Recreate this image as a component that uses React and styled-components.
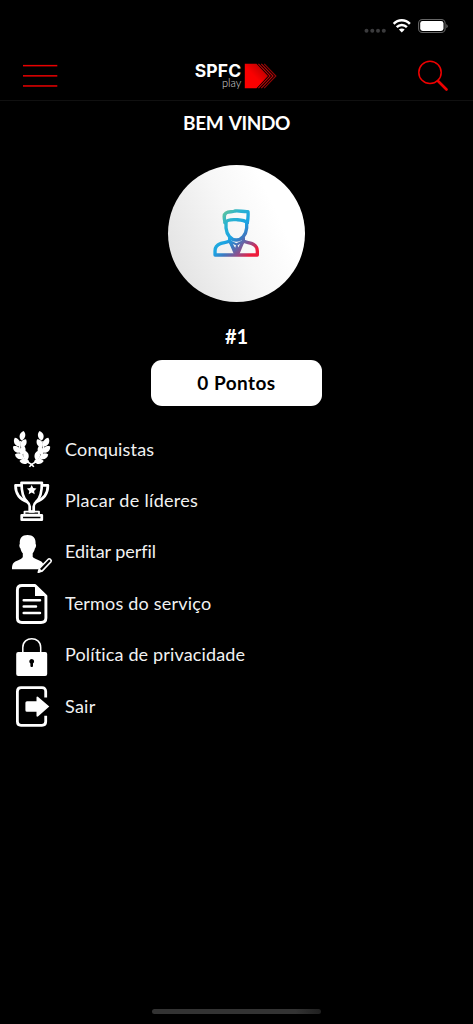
import React from "react";
import styled, { createGlobalStyle } from "styled-components";

const GlobalStyle = createGlobalStyle`
  * {
    box-sizing: border-box;
  }
  body {
    margin: 0;
    background: #000;
    color: #fff;
    font-family: Lato, "Open Sans", sans-serif;
  }
`;

const leaves = [
  [22.3, 11.8, 16],
  [16.8, 18.2, -24],
  [23.3, 19.2, 34],
  [16.8, 25.6, -50],
  [22.6, 26.2, 14],
  [19.4, 32.4, -66],
  [25.8, 31.6, -8],
  [24.4, 37.4, -86],
];

const LaurelHalf = () => (
  <>
    {leaves.map(([x, y, angle]) => (
      <path
        key={`${x}-${y}`}
        d="M0 -4.900C3.600 -2.800 4 2 0.500 4.800C-3.600 2.800 -3.600 -2.400 0 -4.900Z"
        transform={`translate(${x} ${y}) rotate(${angle})`}
      />
    ))}
    <path
      d="M20.300 17C18.500 24 21 35 28 38.300C30 39.300 32.300 40.500 33.800 42.800"
      fill="none"
      stroke="#fff"
      strokeWidth="1.500"
    />
  </>
);

const LaurelIcon = () => (
  <MenuIcon viewBox="0 0 65 51.400">
    <LaurelHalf />
    <g transform="translate(63.200 0) scale(-1 1)">
      <LaurelHalf />
    </g>
  </MenuIcon>
);

const TrophyIcon = () => (
  <MenuIcon viewBox="0 0 65 51.400">
    <g fill="none" stroke="#fff" strokeWidth="2.700" strokeLinejoin="round">
      <path d="M21.500 7.800H41.900C41.900 17 40 23.500 36.500 26.500C34.500 28.300 33.700 29.500 33.700 31.500V36.500H29.700V31.500C29.700 29.500 28.900 28.300 26.900 26.500C23.400 23.500 21.500 17 21.500 7.800Z" />
      <path d="M21.500 10.300H15.500C15.500 18 18.500 24 27.500 27M41.900 10.300H47.900C47.900 18 44.900 24 35.900 27" />
      <path d="M24.500 36.600H39V39.600H24.500Z" strokeWidth="1.800" />
      <path d="M21.700 40.300H41.800V44.700H21.700Z" />
    </g>
    <path d="M31.700 10L33.200 13.100L36.500 13.500L34.100 15.900L34.700 19.200L31.700 17.600L28.700 19.200L29.300 15.900L26.900 13.500L30.200 13.100Z" />
  </MenuIcon>
);

const ProfileIcon = () => (
  <MenuIcon viewBox="0 0 65 51.400">
    <path d="M27.500 8C33 8 36 11 35.600 17C36.500 17.500 36.100 20.500 34.900 21.500C34.400 24 33.400 25.500 32.700 26.300V30C34.500 32.500 42 33 43.300 37L38.500 42.200H12C12 37.500 13 35.300 16.500 34C20 32.700 22.300 31.500 22.800 30V26.300C21.800 25.300 20.800 23.500 20.500 21.500C19.300 20.500 18.900 17.500 19.800 17C19.400 11 22 8 27.500 8Z" />
    <path
      d="M38.300 45.300L39.500 41.200L48.200 32.200C49.400 31 52.100 33.200 51 34.700L42.300 43.900Z"
      fill="#000"
      stroke="#fff"
      strokeWidth="1.600"
      strokeLinejoin="round"
    />
    <path d="M37.800 45.900L39.200 41.200L42.500 43.900Z" />
  </MenuIcon>
);

const DocumentIcon = () => (
  <MenuIcon viewBox="0 0 65 51.400">
    <g fill="none" stroke="#fff" strokeWidth="2.900" strokeLinecap="round">
      <path
        d="M35 7.500H22C19 7.500 17.400 9.300 17.400 12V40C17.400 43 19.300 44.500 22 44.500H41C44 44.500 45.900 43 45.900 40V18Z"
        strokeLinejoin="round"
      />
      <path d="M23.700 22.300H40M23.700 28.600H36M23.700 35H40" strokeWidth="2.500" />
    </g>
    <path d="M35 6.500V18H47Z" />
  </MenuIcon>
);

const LockIcon = () => (
  <MenuIcon viewBox="0 0 65 51.400">
    <path
      d="M22.800 23V17.500C22.800 5.800 40.700 5.800 40.700 17.500V23"
      fill="none"
      stroke="#fff"
      strokeWidth="1.500"
    />
    <rect x="16.200" y="22" width="31" height="24" rx="2" />
    <path
      d="M31.700 29A2.500 2.500 0 0 1 33 33.600V36.200Q31.700 38 30.400 36.200V33.600A2.500 2.500 0 0 1 31.700 29Z"
      fill="#000"
    />
  </MenuIcon>
);

const ExitIcon = () => (
  <MenuIcon viewBox="0 0 65 51.400">
    <path
      d="M45.700 16.500V10.500C45.700 8 44.300 6.600 42 6.600H21C18.700 6.600 17.400 8 17.400 10.500V40.500C17.400 43 18.700 44.300 21 44.300H42C44.300 44.300 45.700 43 45.700 40.500V34.800"
      fill="none"
      stroke="#fff"
      strokeWidth="2.800"
    />
    <path d="M27 20.300H36.500V16.600Q36.700 15 38.200 16L49.300 25.600L38.200 35.200Q36.700 36.300 36.500 34.700V30.700H27Q25.400 30.700 25.400 29.200V21.800Q25.400 20.300 27 20.300Z" />
  </MenuIcon>
);

const menuItems = [
  { title: "Conquistas", icon: LaurelIcon, spacing: 0.18 },
  { title: "Placar de líderes", icon: TrophyIcon, spacing: 0.3 },
  { title: "Editar perfil", icon: ProfileIcon, spacing: -0.05 },
  { title: "Termos do serviço", icon: DocumentIcon, spacing: 0.2 },
  { title: "Política de privacidade", icon: LockIcon, spacing: 0.15 },
  { title: "Sair", icon: ExitIcon, spacing: 0.25 },
];

function StatusIcons() {
  return (
    <StatusBar>
      <svg width="86" height="18" viewBox="363 17 86 18">
        <g fill="#3b3b3d">
          <circle cx="366.500" cy="30.700" r="2" />
          <circle cx="372.300" cy="30.700" r="2" />
          <circle cx="378" cy="30.700" r="2" />
          <circle cx="383.800" cy="30.700" r="2" />
        </g>
        <g fill="none" stroke="#fff" strokeWidth="2.500">
          <path d="M393.700 23.800C398.200 19 405.300 19 409.900 23.800" />
          <path d="M396.700 27.100C399.600 24.200 404 24.200 406.900 27.100" />
        </g>
        <path
          d="M401.800 32.500L398.900 29.600C400.500 28 403.100 28 404.700 29.600Z"
          fill="#fff"
        />
        <rect
          x="418.600"
          y="19.500"
          width="26.500"
          height="13"
          rx="3.800"
          fill="none"
          stroke="#666"
          strokeWidth="1.100"
        />
        <rect x="420.200" y="21.100" width="23.300" height="9.800" rx="2.400" fill="#fff" />
        <path d="M446.300 24V28.300Q447.700 27.500 447.700 26.150Q447.700 24.800 446.300 24Z" fill="#666" />
      </svg>
    </StatusBar>
  );
}

function Header() {
  return (
    <HeaderBar>
      <IconButton aria-label="Menu">
        <svg width="35" height="24" viewBox="0 0 35 24" fill="#e80000">
          <rect y="0.900" width="34.300" height="1.500" />
          <rect y="11.100" width="34.300" height="1.500" />
          <rect y="21.200" width="34.300" height="1.500" />
        </svg>
      </IconButton>
      <Logo>
        <LogoText>
          <LogoName>SPFC</LogoName>
          <LogoSub>play</LogoSub>
        </LogoText>
        <svg width="34" height="26" viewBox="0 0 34 26">
          <defs>
            <linearGradient id="logoRed" x1="0" y1="1" x2="1" y2="0">
              <stop offset="0" stopColor="#ff0000" />
              <stop offset="0.450" stopColor="#fa0000" />
              <stop offset="1" stopColor="#a00000" />
            </linearGradient>
          </defs>
          <path d="M0.800 0.800H12.500L24 13L12.500 25.200H0.800Z" fill="url(#logoRed)" />
          <g fill="none" stroke="#b80808" strokeWidth="1.100">
            <path d="M14.400 0.800L26.100 13L14.400 25.200" />
            <path d="M17.300 0.800L29 13L17.300 25.200" />
            <path d="M20.200 0.800L31.900 13L20.200 25.200" opacity="0.800" />
          </g>
        </svg>
      </Logo>
      <IconButton aria-label="Buscar" $end>
        <svg width="32" height="32" viewBox="0 0 32 32" fill="none" stroke="#f00000">
          <circle cx="13" cy="12.400" r="11.200" strokeWidth="1.500" />
          <path d="M21 21L29.500 29.500" strokeWidth="2.700" strokeLinecap="round" />
        </svg>
      </IconButton>
    </HeaderBar>
  );
}

function Avatar() {
  return (
    <AvatarCircle>
      <svg width="46.700" height="48.300" viewBox="25 25 140 145">
        <defs>
          <linearGradient
            id="avatarStroke"
            gradientUnits="userSpaceOnUse"
            x1="48"
            y1="40"
            x2="158"
            y2="155"
          >
            <stop offset="0" stopColor="#5fc49b" />
            <stop offset="0.200" stopColor="#2bb3cf" />
            <stop offset="0.450" stopColor="#1ba4e4" />
            <stop offset="0.600" stopColor="#3d78c0" />
            <stop offset="0.780" stopColor="#944d89" />
            <stop offset="0.950" stopColor="#ed1c3c" />
          </linearGradient>
        </defs>
        <g
          fill="none"
          stroke="url(#avatarStroke)"
          strokeWidth="10"
          strokeLinejoin="round"
          strokeLinecap="round"
        >
          <path d="M61 66C58 52 56 42 64 37C72 31 82 35 91 31C102 29 116 34 130 33C131 44 130 55 128 66" />
          <path d="M61 66C68 55 82 57 95 57C108 58 119 58 128 66" />
          <path d="M64 62V82C66 103 79 118 95 118C111 118 124 103 126 82V62" />
          <path d="M75 112V120C69 126 57 125 47 129C36 133 31 141 31 151V163H158V151C158 142 152 133 142 129C132 125 122 126 116 120V112" />
          <path d="M75 122L94 154M116 122L97 154" strokeWidth="8" />
        </g>
        <path
          d="M76 118L95 128L115 118L118 127L102 166H90L73 127ZM82 129L91 143L94 134ZM108 129L99 134L101 143Z"
          fill="url(#avatarStroke)"
          fillRule="evenodd"
        />
      </svg>
    </AvatarCircle>
  );
}

function App() {
  return (
    <Screen>
      <GlobalStyle />
      <StatusIcons />
      <Header />
      <Profile>
        <Title>BEM VINDO</Title>
        <Avatar />
        <Rank>#1</Rank>
        <Points>0 Pontos</Points>
      </Profile>
      <MenuList>
        {menuItems.map((item) => {
          const Icon = item.icon;
          return (
            <MenuRow key={item.title}>
              <Icon />
              <MenuLabel $spacing={item.spacing}>{item.title}</MenuLabel>
            </MenuRow>
          );
        })}
      </MenuList>
      <HomeIndicator />
    </Screen>
  );
}

export default App;

const Screen = styled.div`
  display: flex;
  flex-direction: column;
  width: 100%;
  height: 1024px;
  overflow: hidden;
  background: #000;
`;

const StatusBar = styled.div`
  display: flex;
  justify-content: flex-end;
  height: 51px;
  padding: 17px 24px 0 0;
`;

const HeaderBar = styled.header`
  display: grid;
  grid-template-columns: 1fr auto 1fr;
  align-items: center;
  height: 50px;
  padding: 0 24px 0 23px;
  border-bottom: 1px solid #101010;
`;

const IconButton = styled.button`
  display: flex;
  justify-self: ${(props) => (props.$end ? "end" : "start")};
  padding: 0;
  border: 0;
  background: none;
`;

const Logo = styled.div`
  display: flex;
  align-items: center;
  gap: 3px;
  padding-left: 1px;
`;

const LogoText = styled.div`
  display: flex;
  flex-direction: column;
  align-items: flex-end;
  padding-top: 1px;
`;

const LogoName = styled.span`
  font-family: Inter, sans-serif;
  font-size: 17.500px;
  font-weight: 700;
  line-height: 13px;
  letter-spacing: 0.100px;
`;

const LogoSub = styled.span`
  font-size: 11px;
  font-weight: 300;
  line-height: 12px;
  color: #ddd;
`;

const Profile = styled.section`
  display: flex;
  flex-direction: column;
  align-items: center;
`;

const Title = styled.h1`
  margin: 10px 0 0;
  font-size: 19px;
  font-weight: 700;
  line-height: 24px;
  letter-spacing: -0.400px;
  word-spacing: 2px;
`;

const AvatarCircle = styled.div`
  display: flex;
  align-items: center;
  justify-content: center;
  width: 137px;
  height: 137px;
  margin-top: 30px;
  padding-bottom: 1px;
  border-radius: 50%;
  background: linear-gradient(65deg, #dedede 0%, #f7f7f7 50%, #fff 75%);
`;

const Rank = styled.div`
  margin-top: 22px;
  font-size: 20px;
  font-weight: 700;
  line-height: 24px;
`;

const Points = styled.div`
  display: flex;
  align-items: center;
  justify-content: center;
  width: 171px;
  height: 46px;
  margin-top: 12px;
  padding-bottom: 2px;
  border-radius: 11px;
  background: #fff;
  color: #000;
  font-size: 19px;
  font-weight: 700;
  letter-spacing: 0.450px;
`;

const MenuList = styled.nav`
  display: flex;
  flex-direction: column;
  margin-top: 18px;
`;

const MenuRow = styled.div`
  display: flex;
  align-items: center;
  height: 51.400px;
`;

const MenuIcon = styled.svg`
  flex: none;
  width: 65px;
  height: 51.400px;
  fill: #fff;
`;

const MenuLabel = styled.span`
  padding-bottom: 2px;
  color: #f2f2f2;
  font-size: 18px;
  line-height: 24px;
  letter-spacing: ${(props) => props.$spacing}px;
`;

const HomeIndicator = styled.div`
  width: 169px;
  height: 5px;
  margin: auto auto 10px;
  border-radius: 3px;
  background: linear-gradient(90deg, #333 85%, #1f1f1f);
`;
